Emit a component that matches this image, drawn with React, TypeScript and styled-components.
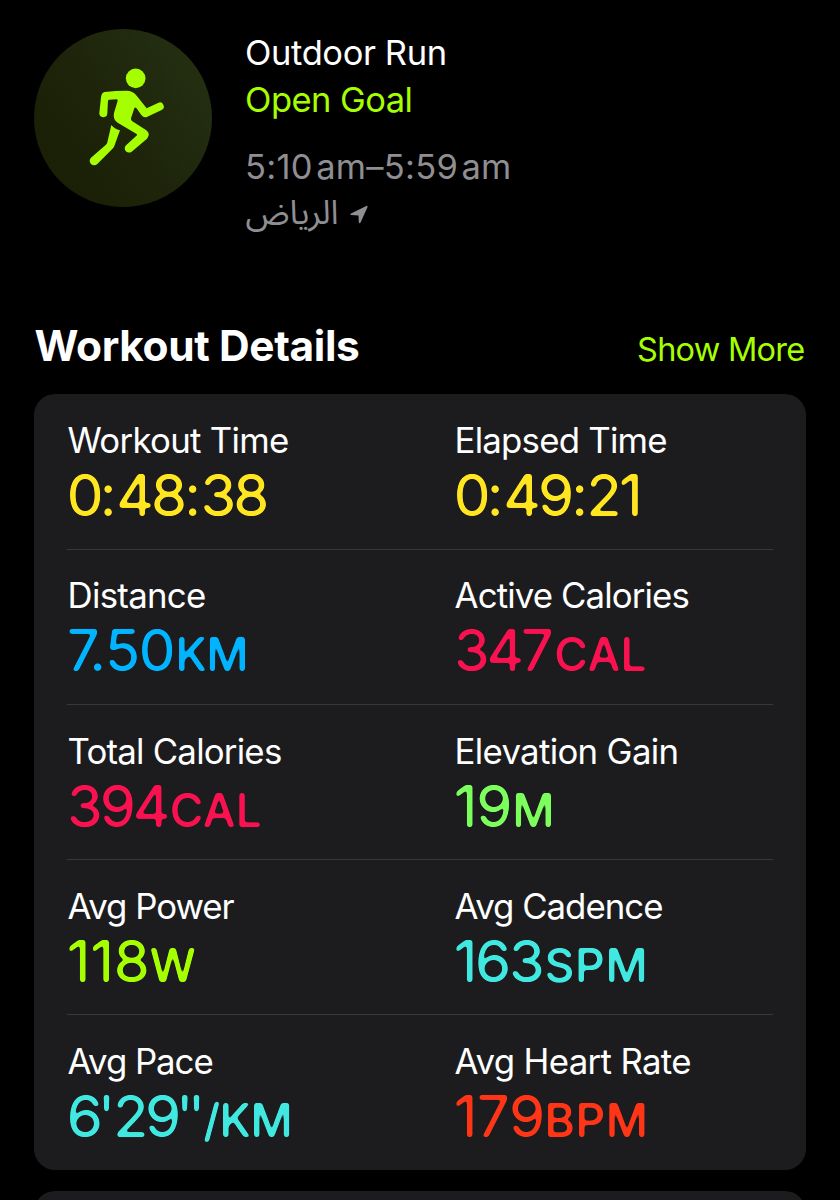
import React from "react";
import styled, { createGlobalStyle } from "styled-components";

const GlobalStyle = createGlobalStyle`
  *, *::before, *::after { box-sizing: border-box; }
  html, body { margin: 0; background: #000; }
  body {
    height: 1200px;
    overflow: hidden;
    font-family: Inter, "Liberation Sans", sans-serif;
    color: #fff;
  }
`;

const Screen = styled.main`
  width: 840px;
  height: 1200px;
  overflow: hidden;
  padding: 29px 34px 0;
  background: #000;
`;

const Header = styled.header`
  display: flex;
  gap: 33.5px;
  height: 290px;
`;

const Badge = styled.div`
  flex: none;
  width: 178px;
  height: 178px;
  margin-left: -0.4px;
  border-radius: 50%;
  overflow: hidden;
  background: linear-gradient(55deg, #191e04 5%, #1e250b 50%, #253113 95%);

  svg { display: block; }
`;

const Summary = styled.div`
  padding-top: 1px;
`;

const Line = styled.div<{ $color: string; $tracking: number; $gap?: number }>`
  display: flex;
  align-items: center;
  height: 46.6px;
  margin-top: ${(p) => p.$gap ?? 0}px;
  font-size: 34.5px;
  line-height: 46.6px;
  white-space: pre;
  color: ${(p) => p.$color};
  letter-spacing: ${(p) => p.$tracking}px;
`;

const Place = styled.span`
  margin-left: 0.5px;
  font-family: "Noto Sans Arabic", "DejaVu Sans", sans-serif;
  font-size: 33.7px;
`;

const Arrow = styled.svg`
  margin: 2px 0 0 11.5px;
`;

const SectionHead = styled.div`
  display: flex;
  align-items: baseline;
  justify-content: space-between;
  height: 74.7px;
  padding: 0 1.5px 0 0.5px;
`;

const Title = styled.h2`
  margin: 0;
  font-size: 42.4px;
  line-height: 54px;
  font-weight: 700;
  letter-spacing: -0.36px;
`;

const More = styled.a`
  font-size: 32.5px;
  letter-spacing: -0.75px;
  color: #a6ff00;
`;

const Card = styled.section`
  height: 776.3px;
  padding: 0 33px;
  border-radius: 21px;
  background: #1c1c1e;
`;

const NextCard = styled(Card)`
  margin-top: 20.7px;
`;

const Row = styled.div`
  display: grid;
  grid-template-columns: 387px 1fr;
  height: 155.2px;
  padding: 25.5px 0 0 0.5px;

  & + & {
    border-top: 1px solid #38383a;
    padding-top: 24.5px;
  }
`;

const Label = styled.div<{ $tracking: number }>`
  font-size: 34.8px;
  line-height: 42px;
  white-space: nowrap;
  letter-spacing: ${(p) => p.$tracking}px;
`;

const Value = styled.div<{ $color: string }>`
  margin: 3px 0 0 -0.7px;
  font-size: 58.3px;
  line-height: 62px;
  white-space: nowrap;
  color: ${(p) => p.$color};
  filter: url(#rounded);
`;

const Glyphs = styled.span<{ $tracking: number }>`
  letter-spacing: ${(p) => p.$tracking}px;
`;

const Unit = styled(Glyphs)`
  font-size: 46.3px;
  font-weight: 500;
`;

const Defs = styled.svg`
  position: absolute;
  width: 0;
  height: 0;
`;

type Part = [text: string, tracking: number];

type Metric = {
  label: Part;
  value: Part[];
  unit?: Part;
  color: string;
};

const YELLOW = "#ffe620";
const BLUE = "#00b4ff";
const PINK = "#fa1150";
const GREEN = "#7cff5c";
const LIME = "#a6ff00";
const TEAL = "#40e8e0";
const RED = "#ff3517";

const rows: [Metric, Metric][] = [
  [
    {
      label: ["Workout Time", -0.7],
      value: [["0", -3.9], [":", -0.3], ["48", -2.9], [":", -0.7], ["38", -2.9]],
      color: YELLOW,
    },
    {
      label: ["Elapsed Time", -0.78],
      value: [["0", -3.9], [":", -0.3], ["49", -2.9], [":", -1.8], ["21", -2.8]],
      color: YELLOW,
    },
  ],
  [
    {
      label: ["Distance", -0.7],
      value: [["7", -10.5], [".", -1.3], ["5", -1.6], ["0", 0]],
      unit: ["KM", -0.9],
      color: BLUE,
    },
    {
      label: ["Active Calories", -0.88],
      value: [["34", -3.4], ["7", 0.6]],
      unit: ["CAL", 0.2],
      color: PINK,
    },
  ],
  [
    {
      label: ["Total Calories", -0.78],
      value: [["39", -3.1], ["4", -0.8]],
      unit: ["CAL", 0.2],
      color: PINK,
    },
    {
      label: ["Elevation Gain", -0.68],
      value: [["1", -1.3], ["9", -0.2]],
      unit: ["M", 0],
      color: GREEN,
    },
  ],
  [
    {
      label: ["Avg Power", -1],
      value: [["118", -0.3]],
      unit: ["W", 0],
      color: LIME,
    },
    {
      label: ["Avg Cadence", -1],
      value: [["16", -2.5], ["3", -0.1]],
      unit: ["SPM", 0.6],
      color: TEAL,
    },
  ],
  [
    {
      label: ["Avg Pace", -1.05],
      value: [["6", -5.3], ["'", -2.2], ["2", -3.5], ["9", -5.2], ["'", -5.6], ["'", -2]],
      unit: ["/KM", -0.9],
      color: TEAL,
    },
    {
      label: ["Avg Heart Rate", -0.66],
      value: [["17", -0.8], ["9", -0.5]],
      unit: ["BPM", 0.5],
      color: RED,
    },
  ],
];

/* Softens stroke ends and corners of the large figures into a rounded face. */
function RoundedFilter() {
  return (
    <Defs aria-hidden="true">
      <filter id="rounded" x="-5%" y="-5%" width="110%" height="110%" colorInterpolationFilters="sRGB">
        <feGaussianBlur stdDeviation="1.45" />
        <feComponentTransfer>
          <feFuncA type="linear" slope="4.5" intercept="-1.62" />
        </feComponentTransfer>
      </filter>
    </Defs>
  );
}

function Runner() {
  return (
    <svg width="178" height="178" viewBox="40 28 534 534" fill={LIME} aria-hidden="true">
      <circle cx="345" cy="176" r="29.5" />
      <path d="M252 217Q285 213 318 213Q336 213 348 228L378 266L412 250A11 11 0 0 1 423 271L380 291Q370 296 362 286L347 265Q343 261 341 266L331 296Q330 302 335 305L377 332Q391 343 379 357L333 396A12.5 12.5 0 0 1 317 376L349 347Q350 345 348 343L291 309Q276 299 280 280L291 243Q291 239 287 239L266 240Q263 240 262 243L260 281A12 12 0 0 1 236 280L241 233Q243 218 252 217Z" />
      <path d="M272 316Q281 328 298 332L281 379Q279 385 274 389L230 433A13 13 0 0 1 211 414L255 376Q259 373 260 368Z" />
    </svg>
  );
}

function Cell({ metric }: { metric: Metric }) {
  return (
    <div>
      <Label $tracking={metric.label[1]}>{metric.label[0]}</Label>
      <Value $color={metric.color}>
        {metric.value.map(([text, tracking], i) => (
          <Glyphs key={i} $tracking={tracking}>{text}</Glyphs>
        ))}
        {metric.unit && <Unit $tracking={metric.unit[1]}>{metric.unit[0]}</Unit>}
      </Value>
    </div>
  );
}

export default function App() {
  return (
    <>
      <GlobalStyle />
      <RoundedFilter />
      <Screen>
        <Header>
          <Badge><Runner /></Badge>
          <Summary>
            <Line $color="#fff" $tracking={-0.4}>Outdoor Run</Line>
            <Line $color={LIME} $tracking={-0.55}>Open Goal</Line>
            <Line $color="#8e8e93" $tracking={0.25} $gap={21}>{"5:10\u200aam–5:59\u200aam"}</Line>
            <Line $color="#8e8e93" $tracking={0}>
              <Place dir="rtl">الرياض</Place>
              <Arrow width="18" height="20" viewBox="0 0 18 20" fill="#8e8e93" aria-hidden="true">
                <path d="M16.3 1Q18 .4 17.4 2.3L10.6 17.5Q9.5 19 8.8 17.3L8.5 10.4L1.2 10.1Q-.5 9.5 1 8.4Z" />
              </Arrow>
            </Line>
          </Summary>
        </Header>
        <SectionHead>
          <Title>Workout Details</Title>
          <More>Show More</More>
        </SectionHead>
        <Card>
          {rows.map((pair, i) => (
            <Row key={i}>
              <Cell metric={pair[0]} />
              <Cell metric={pair[1]} />
            </Row>
          ))}
        </Card>
        <NextCard />
      </Screen>
    </>
  );
}
